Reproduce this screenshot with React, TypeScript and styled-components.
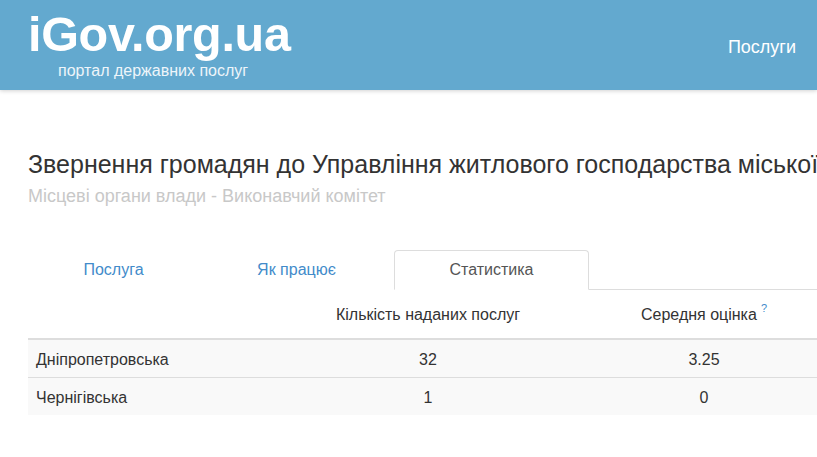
import React from "react";
import styled, { createGlobalStyle } from "styled-components";

const GlobalStyle = createGlobalStyle`
  html, body {
    margin: 0;
    padding: 0;
    background: #ffffff;
    overflow: hidden;
  }
  body {
    font-family: "Liberation Sans", Arial, sans-serif;
    color: #333333;
  }
`;

const Page = styled.div`
  width: 817px;
  min-height: 457px;
  overflow: hidden;
`;

const Header = styled.header`
  height: 90px;
  background: #63a9cf;
  box-shadow: 0 1px 4px rgba(0, 0, 0, 0.18);
  display: flex;
  align-items: flex-start;
  justify-content: space-between;
  box-sizing: border-box;
  padding: 0 21px 0 28px;
  position: relative;
`;

const Brand = styled.div`
  display: flex;
  flex-direction: column;
`;

const Logo = styled.div`
  font-family: "Liberation Sans", Arial, sans-serif;
  font-weight: bold;
  font-size: 48.5px;
  line-height: 56px;
  color: #ffffff;
  margin-top: 6px;
  letter-spacing: -0.3px;
`;

const Tagline = styled.div`
  font-size: 16px;
  line-height: 18px;
  color: #eef5fa;
  margin-left: 30px;
`;

const NavLink = styled.a`
  font-size: 18px;
  color: #ffffff;
  text-decoration: none;
  margin-top: 37px;
  line-height: 20px;
`;

const Content = styled.main`
  padding: 0 0 0 28px;
`;

const Title = styled.h1`
  margin: 59px 0 0 0;
  font-size: 25px;
  line-height: 30px;
  font-weight: normal;
  color: #333333;
  white-space: nowrap;
`;

const Subtitle = styled.div`
  font-size: 18px;
  line-height: 22px;
  color: #c8c8c8;
  margin-top: 6px;
`;

const Tabs = styled.nav`
  display: flex;
  margin-top: 43px;
  border-bottom: 1px solid #dddddd;
  width: 900px;
  height: 39px;
`;

const Tab = styled.a<{ $active?: boolean; $w: number }>`
  width: ${(p) => p.$w}px;
  box-sizing: border-box;
  display: flex;
  align-items: center;
  justify-content: center;
  font-size: 16px;
  text-decoration: none;
  color: ${(p) => (p.$active ? "#555555" : "#428bca")};
  background: #ffffff;
  border: 1px solid ${(p) => (p.$active ? "#dddddd" : "transparent")};
  border-bottom-color: ${(p) => (p.$active ? "#ffffff" : "transparent")};
  border-radius: 4px 4px 0 0;
  margin-bottom: -1px;
  height: 40px;
`;

const Table = styled.table`
  border-collapse: collapse;
  width: 814px;
  font-size: 16px;
  table-layout: fixed;
`;

const HeadCell = styled.th<{ $align?: string; $w: number }>`
  width: ${(p) => p.$w}px;
  box-sizing: border-box;
  font-weight: normal;
  text-align: ${(p) => p.$align || "center"};
  padding: 2px 8px 0;
  height: 49px;
  vertical-align: middle;
  border-bottom: 2px solid #dddddd;
  color: #333333;
`;

const Row = styled.tr`
  background: #f9f9f9;
  & + & td {
    border-top: 1px solid #dddddd;
  }
`;

const Cell = styled.td<{ $align?: string }>`
  box-sizing: border-box;
  text-align: ${(p) => p.$align || "center"};
  padding: 3px 8px 0;
  height: 38px;
  vertical-align: middle;
  color: #333333;
`;

const Hint = styled.sup`
  color: #428bca;
  font-size: 11px;
  margin-left: 4px;
  vertical-align: 8px;
  line-height: 0;
`;

const rows = [
  { name: "Дніпропетровська", count: "32", rating: "3.25" },
  { name: "Чернігівська", count: "1", rating: "0" },
];

export default function App() {
  return (
    <Page>
      <GlobalStyle />
      <Header>
        <Brand>
          <Logo>iGov.org.ua</Logo>
          <Tagline>портал державних послуг</Tagline>
        </Brand>
        <NavLink href="#">Послуги</NavLink>
      </Header>
      <Content>
        <Title>Звернення громадян до Управління житлового господарства міської</Title>
        <Subtitle>Місцеві органи влади - Виконавчий комітет</Subtitle>
        <Tabs>
          <Tab $w={171} href="#">Послуга</Tab>
          <Tab $w={195} href="#">Як працює</Tab>
          <Tab $w={195} $active href="#">Статистика</Tab>
        </Tabs>
        <Table>
          <thead>
            <tr>
              <HeadCell $w={262} $align="left"></HeadCell>
              <HeadCell $w={276}>Кількість наданих послуг</HeadCell>
              <HeadCell $w={276}>
                Середня оцінка<Hint>?</Hint>
              </HeadCell>
            </tr>
          </thead>
          <tbody>
            {rows.map((r) => (
              <Row key={r.name}>
                <Cell $align="left">{r.name}</Cell>
                <Cell>{r.count}</Cell>
                <Cell>{r.rating}</Cell>
              </Row>
            ))}
          </tbody>
        </Table>
      </Content>
    </Page>
  );
}
